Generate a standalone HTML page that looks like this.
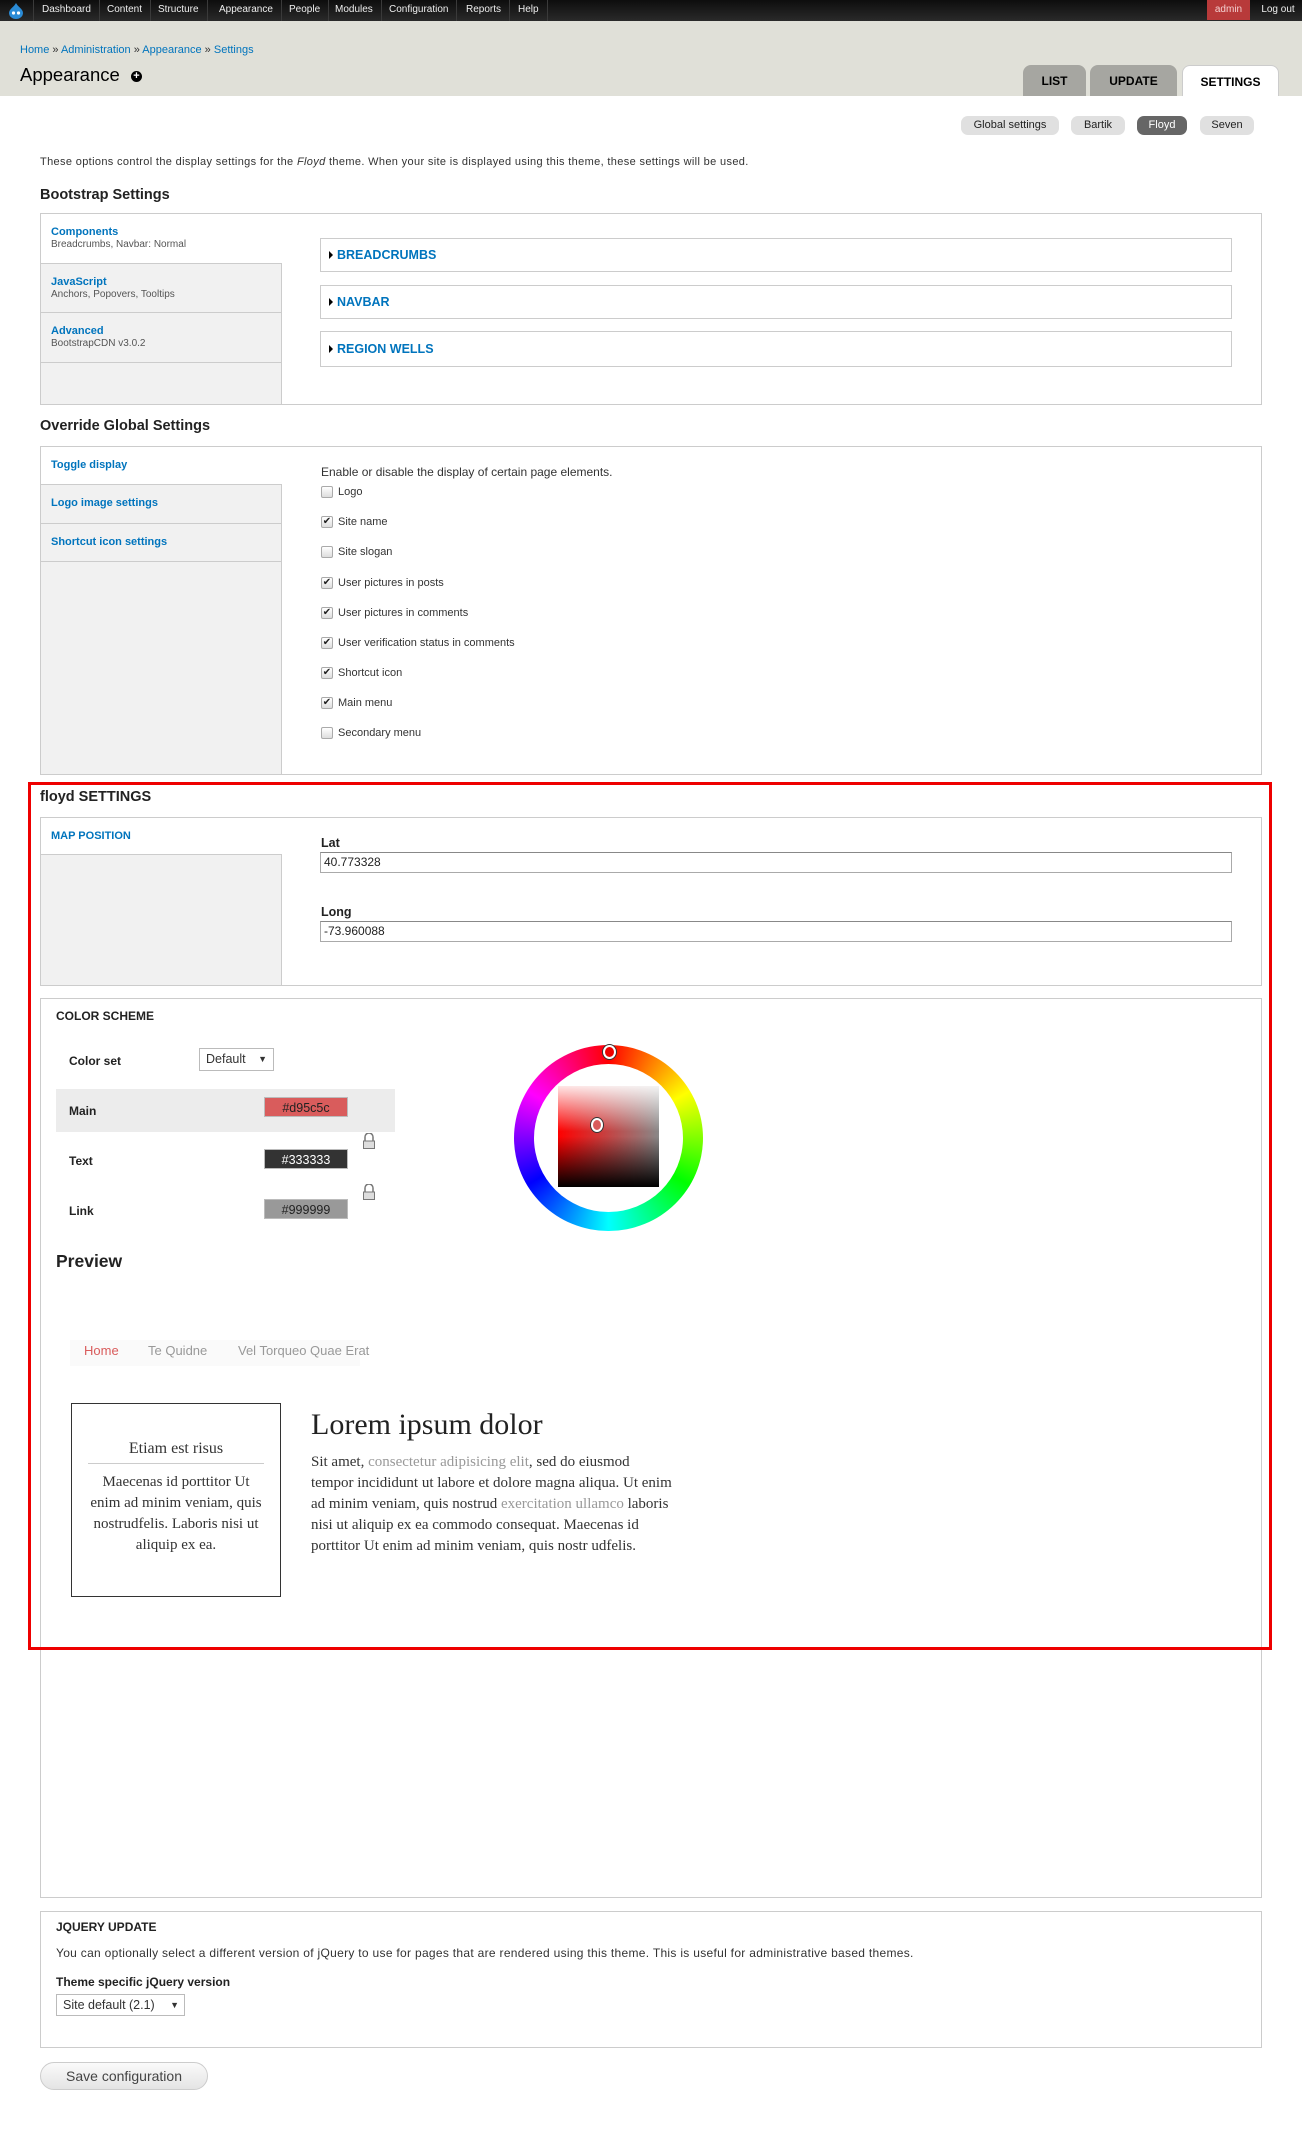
<!DOCTYPE html>
<html><head><meta charset="utf-8"><style>
*{box-sizing:border-box;margin:0;padding:0}
body{width:1302px;height:2156px;position:relative;background:#fff;font-family:"Liberation Sans",Arial,sans-serif;color:#333;font-size:12px;overflow:hidden}
.a{position:absolute}
a,.lnk{color:#0074bd;text-decoration:none}
#tb{left:0;top:0;width:1302px;height:21px;background:linear-gradient(#0d0d0d,#2a2a2a);color:#eee;font-size:10px}
#tb span{position:absolute;top:0;height:21px;line-height:20px;padding:0 8px;border-right:1px solid #3a3a3a}
#hd{left:0;top:21px;width:1302px;height:75px;background:#e0e0d8}
.tab{top:65px;height:31px;background:#a6a6a1;border-radius:8px 8px 0 0;font-weight:bold;font-size:12px;text-align:center;line-height:32px;color:#000}
.pill{top:116px;height:19px;line-height:19px;border-radius:7px;background:#e0e0e0;font-size:11px;text-align:center;color:#222}
.h{font-weight:bold;font-size:14.5px;color:#222}
.box{border:1px solid #ccc;background:#fff}
.vt{background:#f1f1f1;border-right:1px solid #ccc}
.vti{position:absolute;left:0;width:241px;border-bottom:1px solid #ccc;padding:12px 10px 0;font-size:11px}
.vti b{color:#0074bd;font-size:11px;display:block}
.vti small{font-size:10px;color:#555}
.fs{border:1px solid #ccc;left:320px;width:912px;color:#0074bd;font-weight:bold;font-size:12.5px;padding-left:8px;display:flex;align-items:center}
.fs i{display:inline-block;width:0;height:0;border-left:4px solid #000;border-top:4px solid transparent;border-bottom:4px solid transparent;margin-right:4px;font-style:normal}
.cb{left:321px;font-size:11px;color:#333;display:flex;align-items:center}
.cb i{width:12px;height:12px;border:1px solid #aaa;border-radius:2px;background:linear-gradient(#fff,#ddd);margin-right:5px;font-style:normal;font-size:10px;line-height:10px;text-align:center;color:#222}
.inp{left:320px;width:912px;height:21px;border:1px solid #aaa;border-top-color:#888;font-size:12px;padding-left:3px;line-height:19px;color:#222}
.lbl{font-weight:bold;font-size:12.5px;color:#222}
.sw{left:264px;width:84px;height:20px;font-size:12.5px;text-align:center;line-height:20px;border:1px solid #bbb}
.lock{left:362px;width:14px;height:16px}
.serif{font-family:"Liberation Serif","DejaVu Serif",serif}
</style></head><body>
<div id="tb" class="a">
<div class="a" style="left:0;top:0;width:34px;height:21px;border-right:1px solid #3a3a3a"><svg width="34" height="21"><path d="M16 3 C18 7 23 9 23 13 a7 6 0 0 1 -14 0 C9 9 14 7 16 3z" fill="#2a8bd6"/><circle cx="13.5" cy="13" r="1.6" fill="#fff"/><circle cx="18.5" cy="13" r="1.6" fill="#fff"/></svg></div>
<span style="left:34px">Dashboard</span><span style="left:99px">Content</span><span style="left:150px">Structure</span><span style="left:211px">Appearance</span><span style="left:281px">People</span><span style="left:327px">Modules</span><span style="left:381px">Configuration</span><span style="left:458px">Reports</span><span style="left:510px">Help</span>
<div class="a" style="left:1207px;top:0;width:43px;height:20px;background:#b83a3a;color:#f3d0d0;text-align:center;line-height:20px">admin</div>
<div class="a" style="left:1254px;top:0;width:48px;height:20px;text-align:center;line-height:20px">Log out</div>
</div>
<div id="hd" class="a"></div>
<div class="a" style="left:20px;top:44px;font-size:11px"><a>Home</a> » <a>Administration</a> » <a>Appearance</a> » <a>Settings</a></div>
<div class="a" style="left:20px;top:64px;font-size:18.5px;color:#000">Appearance</div>
<div class="a" style="left:131px;top:71px;width:11px;height:11px;border-radius:50%;background:#000;color:#fff;font-size:11px;line-height:10px;text-align:center;font-weight:bold">+</div>
<div class="a tab" style="left:1023px;width:63px">LIST</div>
<div class="a tab" style="left:1090px;width:87px">UPDATE</div>
<div class="a tab" style="left:1182px;width:97px;background:#fff;border:1px solid #ccc;border-bottom:none">SETTINGS</div>
<div class="a pill" style="left:961px;width:98px">Global settings</div>
<div class="a pill" style="left:1071px;width:54px">Bartik</div>
<div class="a pill" style="left:1137px;width:50px;background:#666;color:#fff">Floyd</div>
<div class="a pill" style="left:1200px;width:54px">Seven</div>
<div class="a" style="left:40px;top:156px;font-size:11px;letter-spacing:0.35px">These options control the display settings for the <i>Floyd</i> theme. When your site is displayed using this theme, these settings will be used.</div>

<div class="a h" style="left:40px;top:187px">Bootstrap Settings</div>
<div class="a box" style="left:40px;top:213px;width:1222px;height:192px"></div>
<div class="a vt" style="left:41px;top:214px;width:241px;height:190px">
<div class="vti" style="top:0;height:50px;background:#fff;width:241px"><b>Components</b><small>Breadcrumbs, Navbar: Normal</small></div>
<div class="vti" style="top:50px;height:49px"><b>JavaScript</b><small>Anchors, Popovers, Tooltips</small></div>
<div class="vti" style="top:99px;height:50px"><b>Advanced</b><small>BootstrapCDN v3.0.2</small></div>
</div>
<div class="a fs" style="top:238px;height:34px"><i></i>BREADCRUMBS</div>
<div class="a fs" style="top:285px;height:34px"><i></i>NAVBAR</div>
<div class="a fs" style="top:331px;height:36px"><i></i>REGION WELLS</div>

<div class="a h" style="left:40px;top:418px">Override Global Settings</div>
<div class="a box" style="left:40px;top:446px;width:1222px;height:329px"></div>
<div class="a vt" style="left:41px;top:447px;width:241px;height:327px">
<div class="vti" style="top:0;height:38px;background:#fff"><b>Toggle display</b></div>
<div class="vti" style="top:38px;height:39px"><b>Logo image settings</b></div>
<div class="vti" style="top:77px;height:38px"><b>Shortcut icon settings</b></div>
</div>
<div class="a" style="left:321px;top:465px;font-size:12px">Enable or disable the display of certain page elements.</div>
<div class="a cb" style="top:486px"><i></i>Logo</div>
<div class="a cb" style="top:516px"><i>✔</i>Site name</div>
<div class="a cb" style="top:546px"><i></i>Site slogan</div>
<div class="a cb" style="top:577px"><i>✔</i>User pictures in posts</div>
<div class="a cb" style="top:607px"><i>✔</i>User pictures in comments</div>
<div class="a cb" style="top:637px"><i>✔</i>User verification status in comments</div>
<div class="a cb" style="top:667px"><i>✔</i>Shortcut icon</div>
<div class="a cb" style="top:697px"><i>✔</i>Main menu</div>
<div class="a cb" style="top:727px"><i></i>Secondary menu</div>

<div class="a h" style="left:40px;top:789px">floyd SETTINGS</div>
<div class="a box" style="left:40px;top:817px;width:1222px;height:169px"></div>
<div class="a vt" style="left:41px;top:818px;width:241px;height:167px">
<div class="vti" style="top:0;height:37px;background:#fff"><b>MAP POSITION</b></div>
</div>
<div class="a lbl" style="left:321px;top:836px">Lat</div>
<div class="a inp" style="top:852px">40.773328</div>
<div class="a lbl" style="left:321px;top:905px">Long</div>
<div class="a inp" style="top:921px">-73.960088</div>

<div class="a box" style="left:40px;top:998px;width:1222px;height:900px"></div>
<div class="a" style="left:56px;top:1009px;font-weight:bold;font-size:12px;color:#222">COLOR SCHEME</div>
<div class="a lbl" style="left:69px;top:1054px;font-size:12px">Color set</div>
<div class="a" style="left:199px;top:1048px;width:75px;height:23px;border:1px solid #bbb;font-size:12.5px;line-height:21px;padding-left:6px">Default <span style="position:absolute;right:6px;font-size:9px">▼</span></div>
<div class="a" style="left:56px;top:1089px;width:339px;height:43px;background:#ececec"></div>
<div class="a lbl" style="left:69px;top:1104px;font-size:12px">Main</div>
<div class="a sw" style="top:1097px;background:#d95c5c;color:#222">#d95c5c</div>
<div class="a lbl" style="left:69px;top:1154px;font-size:12px">Text</div>
<div class="a sw" style="top:1149px;background:#333;color:#fff">#333333</div>
<div class="a lbl" style="left:69px;top:1204px;font-size:12px">Link</div>
<div class="a sw" style="top:1199px;background:#999;color:#222">#999999</div>
<svg class="a lock" style="top:1133px" viewBox="0 0 14 16"><path d="M3 8V4a4 4 0 0 1 8 0v4" fill="none" stroke="#777" stroke-width="1.5"/><rect x="1.5" y="8" width="11" height="7.5" fill="#ddd" stroke="#777"/></svg>
<svg class="a lock" style="top:1184px" viewBox="0 0 14 16"><path d="M3 8V4a4 4 0 0 1 8 0v4" fill="none" stroke="#777" stroke-width="1.5"/><rect x="1.5" y="8" width="11" height="7.5" fill="#ddd" stroke="#777"/></svg>
<div class="a" style="left:514px;top:1045px;width:189px;height:186px;border-radius:50%;background:conic-gradient(red,#ff0,#0f0,#0ff,#00f,#f0f,red)"></div>
<div class="a" style="left:534px;top:1064px;width:149px;height:148px;border-radius:50%;background:#fff"></div>
<div class="a" style="left:558px;top:1086px;width:101px;height:101px;background:linear-gradient(to bottom,rgba(255,255,255,.9),rgba(255,255,255,0) 45%,rgba(0,0,0,0) 50%,#000),linear-gradient(to right,red,#888)"></div>
<div class="a" style="left:603px;top:1045px;width:13px;height:14px;border-radius:50%;border:2px solid #fff;background:#e00;box-shadow:0 0 0 1px #333"></div>
<div class="a" style="left:591px;top:1118px;width:12px;height:14px;border-radius:50%;border:2px solid #fff;background:#d95c5c;box-shadow:0 0 0 1px #333"></div>

<div class="a" style="left:56px;top:1251px;font-weight:bold;font-size:17.5px;color:#222">Preview</div>
<div class="a" style="left:70px;top:1340px;width:290px;height:26px;background:#fafafa"></div>
<div class="a" style="left:84px;top:1343px;font-size:13px;color:#d95c5c">Home</div>
<div class="a" style="left:148px;top:1343px;font-size:13px;color:#999">Te Quidne</div>
<div class="a" style="left:238px;top:1343px;font-size:13px;color:#999">Vel Torqueo Quae Erat</div>
<div class="a serif" style="left:71px;top:1403px;width:210px;height:194px;border:1px solid #333;text-align:center;font-size:15px;line-height:21px;color:#333">
<div style="margin:34px 16px 0;padding-bottom:4px;border-bottom:1px solid #ccc;font-size:16px">Etiam est risus</div>
<div style="margin:8px 16px 0">Maecenas id porttitor Ut enim ad minim veniam, quis nostrudfelis. Laboris nisi ut aliquip ex ea.</div>
</div>
<div class="a serif" style="left:311px;top:1408px;font-size:30px;color:#222">Lorem ipsum dolor</div>
<div class="a serif" style="left:311px;top:1452px;width:363px;font-size:15px;line-height:21px;color:#333">Sit amet, <span style="color:#999">consectetur adipisicing elit</span>, sed do eiusmod tempor incididunt ut labore et dolore magna aliqua. Ut enim ad minim veniam, quis nostrud <span style="color:#999">exercitation ullamco</span> laboris nisi ut aliquip ex ea commodo consequat. Maecenas id porttitor Ut enim ad minim veniam, quis nostr udfelis.</div>

<div class="a" style="left:28px;top:782px;width:1244px;height:868px;border:3px solid #e00"></div>

<div class="a box" style="left:40px;top:1911px;width:1222px;height:137px"></div>
<div class="a" style="left:56px;top:1920px;font-weight:bold;font-size:12px;color:#222">JQUERY UPDATE</div>
<div class="a" style="left:56px;top:1946px;font-size:12px;letter-spacing:0.3px">You can optionally select a different version of jQuery to use for pages that are rendered using this theme. This is useful for administrative based themes.</div>
<div class="a" style="left:56px;top:1975px;font-weight:bold;font-size:12px;color:#222">Theme specific jQuery version</div>
<div class="a" style="left:56px;top:1994px;width:129px;height:22px;border:1px solid #bbb;font-size:12.5px;line-height:20px;padding-left:6px">Site default (2.1) <span style="position:absolute;right:5px;font-size:9px">▼</span></div>
<div class="a" style="left:40px;top:2062px;width:168px;height:28px;border:1px solid #ccc;border-radius:14px;background:linear-gradient(#fafafa,#e4e4e4);font-size:14px;line-height:26px;text-align:center;color:#444">Save configuration</div>
</body></html>
